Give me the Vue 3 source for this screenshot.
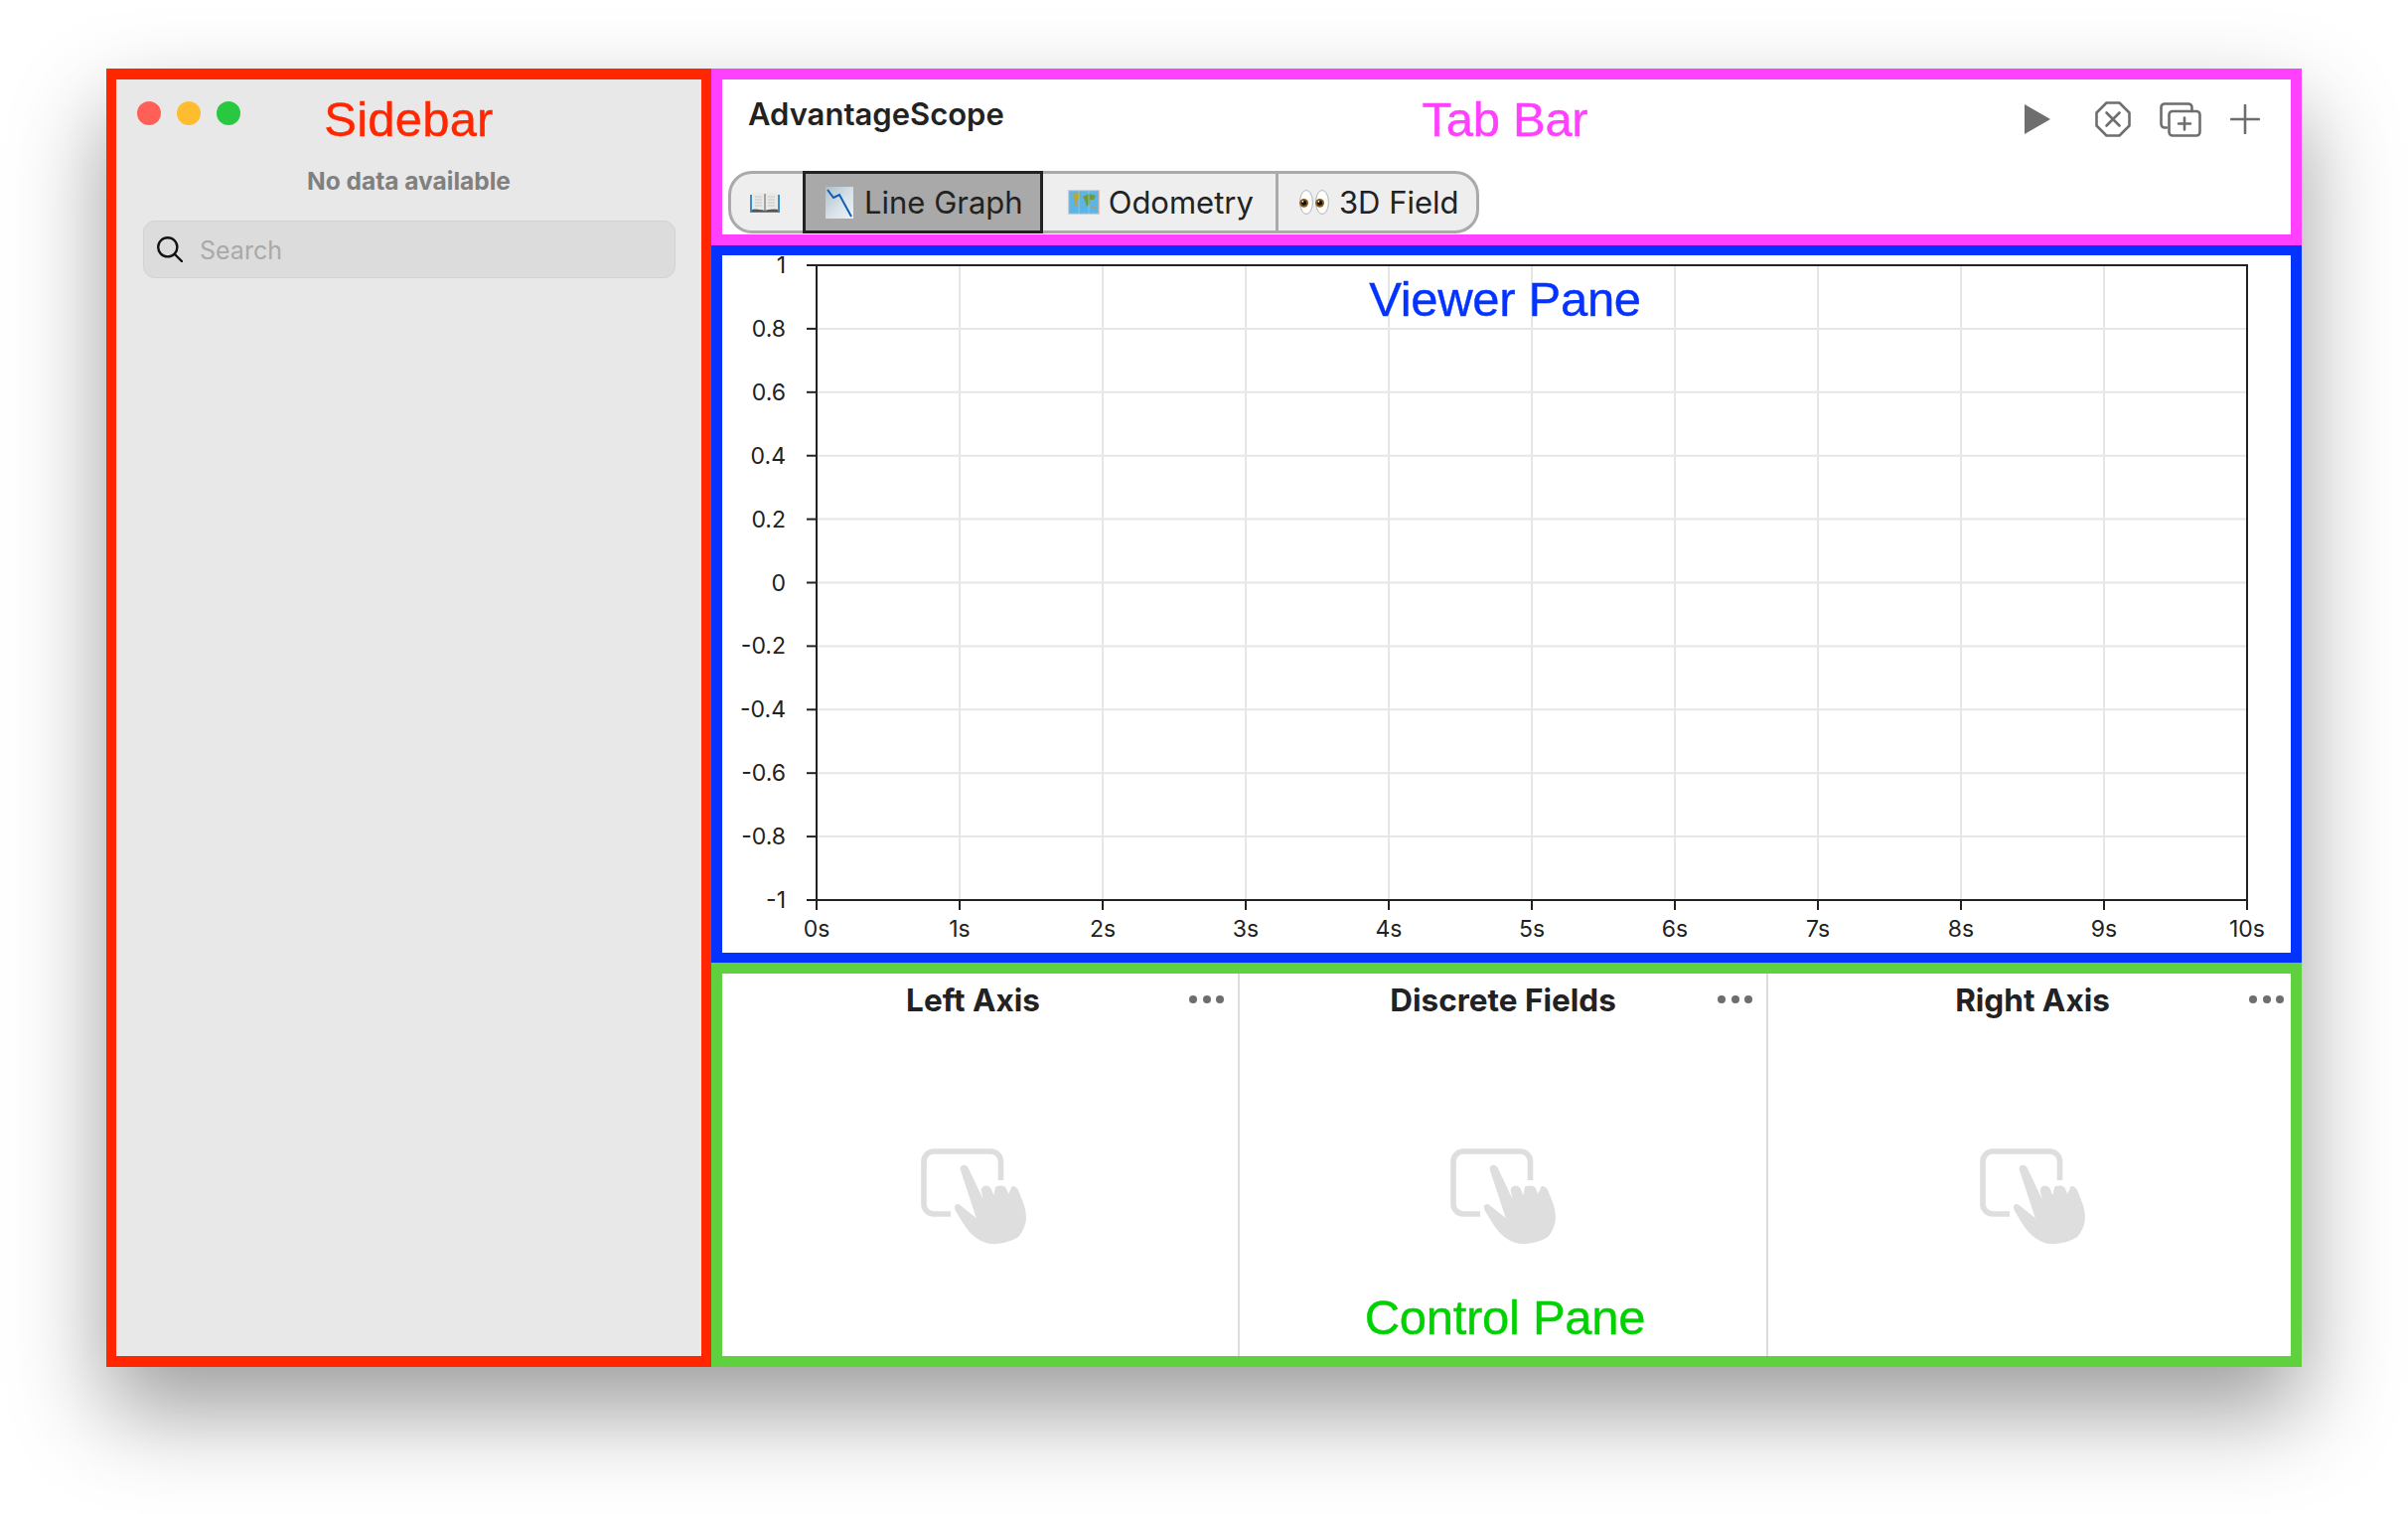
<script setup>
// Datos del gráfico
const plot = { left: 95, top: 10, width: 1440, height: 639 }
const yLabels = ['1', '0.8', '0.6', '0.4', '0.2', '0', '-0.2', '-0.4', '-0.6', '-0.8', '-1']
const xLabels = ['0s', '1s', '2s', '3s', '4s', '5s', '6s', '7s', '8s', '9s', '10s']

const yTicks = yLabels.map((label, i) => ({ label, y: plot.top + (plot.height * i) / 10 }))
const xTicks = xLabels.map((label, i) => ({ label, x: plot.left + (plot.width * i) / 10 }))

const panels = [
  { title: 'Left Axis', cls: 'panel-left' },
  { title: 'Discrete Fields', cls: 'panel-mid' },
  { title: 'Right Axis', cls: 'panel-right' }
]
</script>

<template>
  <div class="page">
    <div class="window">
      <aside class="sidebar">
        <div class="lights">
          <span class="light red"></span>
          <span class="light yellow"></span>
          <span class="light green"></span>
        </div>
        <div class="no-data">No data available</div>
        <div class="search">
          <svg class="search-icon" width="26" height="26" viewBox="0 0 26 26" fill="none" stroke="#111" stroke-width="2.4" stroke-linecap="round">
            <circle cx="10.8" cy="10.8" r="9.6" />
            <path d="M18 18l7 7" />
          </svg>
          <span class="search-text">Search</span>
        </div>
        <span class="tag tag-sidebar">Sidebar</span>
      </aside>

      <main class="content">
        <header class="tabbar">
          <div class="titlebar">
            <span class="app-title">AdvantageScope</span>
            <div class="toolbar">
              <svg class="tool tool-play" width="26" height="30" viewBox="0 0 26 30"><path d="M0 0L26 15L0 30Z" fill="#6e6e6e" /></svg>
              <svg class="tool" width="36" height="36" viewBox="0 0 36 36" fill="none" stroke="#6e6e6e" stroke-width="2.6" stroke-linejoin="round" stroke-linecap="round">
                <path d="M11.5 1.5H24.5L34.5 11.5V24.5L24.5 34.5H11.5L1.5 24.5V11.5Z" />
                <path d="M11.5 11.5L24.5 24.5M24.5 11.5L11.5 24.5" />
              </svg>
              <svg class="tool" width="42" height="35" viewBox="0 0 42 35" fill="none" stroke="#6e6e6e" stroke-width="2.6" stroke-linecap="round">
                <path d="M7 25.5H5A3.5 3.5 0 0 1 1.5 22V5A3.5 3.5 0 0 1 5 1.5H29A3.5 3.5 0 0 1 32.5 5V9" />
                <rect x="9.5" y="9" width="31" height="24.5" rx="3.5" />
                <path d="M25 15.5V27.5M19 21.5H31" />
              </svg>
              <svg class="tool" width="30" height="30" viewBox="0 0 30 30" fill="none" stroke="#6e6e6e" stroke-width="2.6" stroke-linecap="round">
                <path d="M15 1V29M1 15H29" />
              </svg>
            </div>
          </div>
          <nav class="tabs">
            <div class="tab tab-docs">
              <svg width="30" height="22" viewBox="0 0 30 22">
                <path d="M0 3H30V21H0Z" fill="#3f8cc2" />
                <path d="M2 1C7 0 11 0.5 15 2C19 0.5 23 0 28 1V18C23 17.5 19 18 15 19C11 18 7 17.5 2 18Z" fill="#e9e9e6" />
                <path d="M2 18C7 17.5 11 18 15 19C19 18 23 17.5 28 18V20H2Z" fill="#55555a" />
                <path d="M15 2V20" stroke="#77756c" stroke-width="1.2" />
                <path d="M5 5H12M5 8H12M5 11H12M5 14H12M18 5H25M18 8H25M18 11H25M18 14H25" stroke="#c6c8ca" stroke-width="1.2" />
              </svg>
            </div>
            <div class="tab tab-active">
              <svg width="28" height="32" viewBox="0 0 28 32">
                <defs>
                  <linearGradient id="chartBg" x1="0" y1="0" x2="1" y2="1">
                    <stop offset="0" stop-color="#aebfca" />
                    <stop offset="0.55" stop-color="#d8e2e8" />
                    <stop offset="1" stop-color="#eef3f5" />
                  </linearGradient>
                </defs>
                <rect width="28" height="32" fill="url(#chartBg)" />
                <path d="M2 3L8 11L14 8L26 30" fill="none" stroke="#0d5cc0" stroke-width="2" />
              </svg>
              <span>Line Graph</span>
            </div>
            <div class="tab tab-map">
              <svg width="32" height="25" viewBox="0 0 32 25">
                <rect width="32" height="25" fill="#e8c4b0" />
                <rect x="1.2" y="1.2" width="29.6" height="22.6" fill="#5fb4e6" />
                <path d="M5 4L12 3L13 7L9 11L10 17L7 15L6 9Z" fill="#b8a832" />
                <path d="M15 7L21 4L28 6L26 10L22 10L22 14L19 17L17 11Z" fill="#6f9a35" />
                <path d="M24 16L28 16L27 19L24 18Z" fill="#d49a3a" />
                <path d="M11 1V24M21 1V24" stroke="#8ccbee" stroke-width="0.8" />
              </svg>
              <span>Odometry</span>
            </div>
            <div class="tab tab-last">
              <svg width="30" height="25" viewBox="0 0 30 25">
                <ellipse cx="7" cy="12.5" rx="6.4" ry="12" fill="#fff" stroke="#b4b4b4" />
                <ellipse cx="23" cy="12.5" rx="6.4" ry="12" fill="#fff" stroke="#b4b4b4" />
                <circle cx="4.6" cy="13.3" r="4.4" fill="#8a5a10" />
                <circle cx="20.6" cy="13.3" r="4.4" fill="#8a5a10" />
                <circle cx="4.6" cy="13.3" r="2.5" fill="#111" />
                <circle cx="20.6" cy="13.3" r="2.5" fill="#111" />
                <circle cx="3.4" cy="11.8" r="0.9" fill="#fff" />
                <circle cx="19.4" cy="11.8" r="0.9" fill="#fff" />
              </svg>
              <span>3D Field</span>
            </div>
          </nav>
          <span class="tag tag-tabbar">Tab Bar</span>
        </header>

        <section class="viewer">
          <svg class="chart" width="1579" height="702" viewBox="0 0 1579 702">
            <g stroke="#e6e6e6" stroke-width="2">
              <line v-for="t in yTicks" :key="'gy' + t.label" :x1="plot.left" :x2="plot.left + plot.width" :y1="t.y" :y2="t.y" />
              <line v-for="t in xTicks" :key="'gx' + t.label" :x1="t.x" :x2="t.x" :y1="plot.top" :y2="plot.top + plot.height" />
            </g>
            <g stroke="#222" stroke-width="2">
              <rect :x="plot.left" :y="plot.top" :width="plot.width" :height="plot.height" fill="none" />
              <line v-for="t in yTicks" :key="'ty' + t.label" :x1="plot.left - 10" :x2="plot.left" :y1="t.y" :y2="t.y" />
              <line v-for="t in xTicks" :key="'tx' + t.label" :x1="t.x" :x2="t.x" :y1="plot.top + plot.height" :y2="plot.top + plot.height + 10" />
            </g>
            <g class="chart-text">
              <text v-for="t in yTicks" :key="'ly' + t.label" x="64" :y="t.y" text-anchor="end" dominant-baseline="central">{{ t.label }}</text>
              <text v-for="t in xTicks" :key="'lx' + t.label" :x="t.x" :y="plot.top + plot.height + 29" text-anchor="middle" dominant-baseline="central">{{ t.label }}</text>
            </g>
          </svg>
          <span class="tag tag-viewer">Viewer Pane</span>
        </section>

        <section class="control">
          <div v-for="p in panels" :key="p.title" :class="['panel', p.cls]">
            <div class="panel-title">{{ p.title }}</div>
            <div class="panel-dots"><i></i><i></i><i></i></div>
            <div class="panel-body">
              <svg width="106" height="97" viewBox="0 0 106 97">
                <path d="M80.5 32V13A10 10 0 0 0 70.5 3H13A10 10 0 0 0 3 13V56A10 10 0 0 0 13 66H30" fill="none" stroke="#dedede" stroke-width="5.6" />
                <path d="M39.7 21.3L55.7 70L39 56.7Q36 54.8 34 58Q33.5 60 35 63L41.7 74Q48 85 56.7 90.7Q65 96.5 75 96.3Q89 95 98.3 89Q105 81 106 70.7Q106 64 104 57.3L98.3 42.3Q95.5 37.5 91.7 38L88.3 45.7L85.5 39.5Q83 37 80 37.5Q76 37.5 75 39L73.3 47.3L70.5 40Q67 36.5 63.3 38Q60.5 39.5 60.7 42.3L62.7 51.3L48.3 20.7Q46.5 16.5 43 16.7Q39 17.5 39.7 21.3Z" fill="#dedede" />
              </svg>
            </div>
          </div>
          <span class="tag tag-control">Control Pane</span>
        </section>
      </main>
    </div>
  </div>
</template>

<style>
html,
body {
  margin: 0;
  background: #fff;
}
</style>

<style scoped>
.page {
  width: 2424px;
  height: 1524px;
  padding: 69px 0 0 107px;
  box-sizing: border-box;
  overflow: hidden;
  font-family: Inter, "Liberation Sans", sans-serif;
  color: #222;
}

.window {
  display: flex;
  width: 2210px;
  height: 1307px;
  background: #fff;
  box-shadow: 0 44px 88px rgba(0, 0, 0, 0.39);
}

.tag {
  position: absolute;
  left: 0;
  right: 3px;
  text-align: center;
  font-family: "Liberation Sans", Arial, sans-serif;
  font-size: 49px;
  line-height: 56px;
  letter-spacing: -0.3px;
  -webkit-text-stroke: 0.4px currentColor;
}

.tag-sidebar { top: 12px; right: 0; letter-spacing: 0.2px; color: #ff2600; }
.tag-tabbar { top: 12px; color: #ff40ff; }
.tag-viewer { top: 16px; color: #0433ff; }
.tag-control { bottom: 11px; color: #00d100; }

/* Sidebar */
.sidebar {
  position: relative;
  flex: none;
  width: 609px;
  box-sizing: border-box;
  border: solid #ff2600;
  border-width: 11px 10px;
  background: #e8e8e8;
}

.lights {
  display: flex;
  gap: 16px;
  padding: 22px 0 0 21px;
}

.light {
  width: 24px;
  height: 24px;
  border-radius: 50%;
}

.red { background: #ff5f57; }
.yellow { background: #febc2e; }
.green { background: #28c840; }

.no-data {
  margin-top: 41px;
  text-align: center;
  font-size: 24.5px;
  line-height: 30px;
  font-weight: 700;
  color: #808080;
}

.search {
  display: flex;
  align-items: center;
  gap: 17px;
  height: 58px;
  box-sizing: border-box;
  margin: 25px 26px 0 27px;
  padding: 0 13px;
  background: #dcdcdc;
  border: 1px solid #d2d2d2;
  border-radius: 12px;
}

.search-text {
  font-size: 25px;
  margin-top: 2px;
  color: #a9a9a9;
}

/* Tab bar */
.content {
  flex: 1;
  min-width: 0;
  display: flex;
  flex-direction: column;
}

.tabbar {
  position: relative;
  flex: none;
  height: 178px;
  box-sizing: border-box;
  border: 11px solid #ff40ff;
  display: flex;
  flex-direction: column;
  justify-content: space-between;
  padding: 0 0 1px 6px;
}

.titlebar {
  display: flex;
  justify-content: space-between;
  align-items: center;
  height: 80px;
  padding: 0 31px 0 20px;
}

.app-title {
  font-size: 31px;
  font-weight: 600;
  margin-top: -12px;
}

.toolbar {
  display: flex;
  align-items: center;
  gap: 29px;
}

.tool-play {
  margin-right: 16px;
}

.tabs {
  display: flex;
  align-self: flex-start;
  height: 63px;
}

.tab {
  display: flex;
  align-items: center;
  gap: 10px;
  box-sizing: border-box;
  padding: 0 22px 0 21px;
  background: #eee;
  border: solid #aaa;
  border-width: 3px 0 3px 3px;
  font-size: 31px;
}

.tab-docs {
  padding: 0 23px 0 19px;
  border-radius: 24px 0 0 24px;
}

.tab-active {
  background: #a9a9a9;
  border: 3px solid #222;
  gap: 11px;
  padding: 0 17px 0 20px;
}

.tab-map {
  border-left: none;
  gap: 9px;
  padding: 0 22px 0 25px;
}

.tab-last {
  border-right-width: 3px;
  padding-right: 17px;
  border-radius: 0 24px 24px 0;
}

/* Gráfico */
.viewer {
  position: relative;
  flex: 1;
  min-height: 0;
  box-sizing: border-box;
  border: solid #0433ff;
  border-width: 10px 11px;
}

.chart {
  display: block;
}

.chart-text {
  font-size: 23px;
  fill: #222;
}

/* Paneles */
.control {
  position: relative;
  flex: none;
  height: 407px;
  box-sizing: border-box;
  border: 11px solid #5fd13f;
  display: grid;
  grid-template-columns: 519px 532px 1fr;
}

.panel {
  position: relative;
  display: flex;
  flex-direction: column;
  box-sizing: border-box;
  border-left: 2px solid #ddd;
}

.panel-left {
  border-left: none;
  padding-right: 14px;
}

.panel-right {
  padding-left: 6px;
}

.panel-title {
  text-align: center;
  font-size: 31.5px;
  line-height: 38px;
  font-weight: 700;
  margin-top: 8px;
}

.panel-dots {
  position: absolute;
  top: 22px;
  right: 14px;
  display: flex;
  gap: 5.5px;
}

.panel-right .panel-dots {
  right: 7px;
}

.panel-dots i {
  width: 8px;
  height: 8px;
  border-radius: 50%;
  background: #6e6e6e;
}

.panel-body {
  display: flex;
  justify-content: center;
  padding-top: 130px;
}
</style>
